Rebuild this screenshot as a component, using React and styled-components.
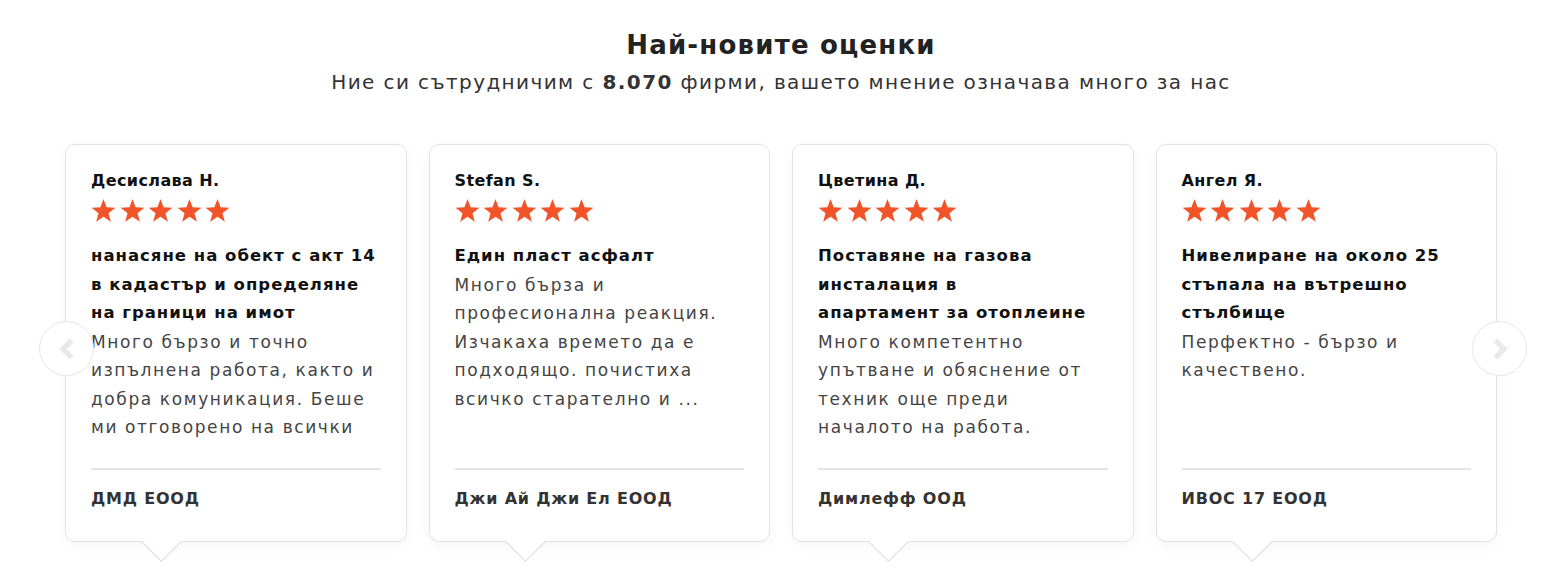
import React from "react";
import styled, { createGlobalStyle } from "styled-components";

const GlobalStyle = createGlobalStyle`
  body {
    margin: 0;
    background: #ffffff;
    font-family: "DejaVu Sans", "Noto Sans", sans-serif;
  }
`;

const Section = styled.section`
  display: flex;
  flex-direction: column;
  align-items: center;
  padding: 28px 0 30px;
`;

const Heading = styled.h2`
  margin: 0;
  font-size: 26px;
  line-height: 34px;
  font-weight: 700;
  letter-spacing: 1.2px;
  color: #222222;
`;

const Subheading = styled.p`
  margin: 6px 0 0;
  font-size: 20px;
  line-height: 28px;
  letter-spacing: 1.4px;
  color: #333333;
  b {
    font-weight: 700;
  }
`;

const Carousel = styled.div`
  position: relative;
  width: 1432px;
  margin-top: 48px;
`;

const Track = styled.div`
  display: grid;
  grid-template-columns: repeat(4, 1fr);
  gap: 22px;
`;

const Card = styled.article`
  position: relative;
  display: flex;
  flex-direction: column;
  height: 398px;
  box-sizing: border-box;
  padding: 24px 25px 0;
  background: #ffffff;
  border: 1px solid #e3e3e3;
  border-radius: 10px;
  box-shadow: 0 4px 14px rgba(0, 0, 0, 0.04);

  &::after {
    content: "";
    position: absolute;
    z-index: 1;
    left: 81px;
    bottom: -15px;
    width: 28px;
    height: 28px;
    background: #ffffff;
    border-right: 1px solid #dcdcdc;
    border-bottom: 1px solid #dcdcdc;
    transform: rotate(45deg);
  }
`;

const Author = styled.div`
  font-size: 16px;
  line-height: 24px;
  font-weight: 700;
  letter-spacing: 0.4px;
  color: #111111;
`;

const Stars = styled.div`
  display: flex;
  gap: 3.5px;
  margin-top: 4px;
  height: 26px;
  align-items: center;
`;

const Content = styled.div`
  margin-top: 19px;
  height: 200px;
  overflow: hidden;
  line-height: 28.5px;
  white-space: nowrap;
`;

const Title = styled.div`
  font-size: 16.5px;
  font-weight: 700;
  letter-spacing: 1px;
  color: #111111;
`;

const Body = styled.div`
  font-size: 17px;
  letter-spacing: 1.6px;
  color: #444444;
`;

const Divider = styled.hr`
  margin: 26px 0 0;
  border: none;
  height: 2px;
  background: #e4e4e4;
`;

const Company = styled.div`
  margin-top: 17px;
  font-size: 16px;
  line-height: 24px;
  font-weight: 700;
  letter-spacing: 0.8px;
  color: #333333;
`;

const ArrowButton = styled.button`
  position: absolute;
  z-index: 2;
  top: 177px;
  ${(p) => (p.$side === "left" ? "left: -26px;" : "right: -30px;")}
  width: 55px;
  height: 55px;
  padding: 0;
  display: flex;
  align-items: center;
  justify-content: center;
  border-radius: 50%;
  border: 1px solid #e6e6e6;
  background: #ffffff;
  cursor: pointer;
`;

const Star = () => (
  <svg width="25" height="25" viewBox="0 0 24 24">
    <path
      d="M12 1L14.94 8.95 23.41 9.29 16.76 14.55 19.05 22.71 12 18 4.95 22.71 7.24 14.55 0.59 9.29 9.06 8.95Z"
      fill="#f2542a"
    />
  </svg>
);

const Chevron = ({ dir }) => (
  <svg width="18" height="22" viewBox="0 0 18 22">
    <path
      d={dir === "left" ? "M13.5 2.5L5 11l8.5 8.5" : "M4.5 2.5L13 11l-8.5 8.5"}
      fill="none"
      stroke="#e9e9e9"
      strokeWidth="5.5"
    />
  </svg>
);

// редовете са разделени както в оригинала
const reviews = [
  {
    author: "Десислава Н.",
    title: ["нанасяне на обект с акт 14", "в кадастър и определяне", "на граници на имот"],
    body: [
      "Много бързо и точно",
      "изпълнена работа, както и",
      "добра комуникация. Беше",
      "ми отговорено на всички",
    ],
    company: "ДМД ЕООД",
  },
  {
    author: "Stefan S.",
    title: ["Един пласт асфалт"],
    body: [
      "Много бърза и",
      "професионална реакция.",
      "Изчакаха времето да е",
      "подходящо. почистиха",
      "всичко старателно и ...",
    ],
    company: "Джи Ай Джи Ел ЕООД",
  },
  {
    author: "Цветина Д.",
    title: ["Поставяне на газова", "инсталация в", "апартамент за отоплеине"],
    body: [
      "Много компетентно",
      "упътване и обяснение от",
      "техник още преди",
      "началото на работа.",
    ],
    company: "Димлефф ООД",
  },
  {
    author: "Ангел Я.",
    title: ["Нивелиране на около 25", "стъпала на вътрешно", "стълбище"],
    body: ["Перфектно - бързо и", "качествено."],
    company: "ИВОС 17 ЕООД",
  },
];

const Lines = ({ lines }) =>
  lines.map((line, i) => (
    <React.Fragment key={i}>
      {i > 0 && <br />}
      {line}
    </React.Fragment>
  ));

export default function App() {
  return (
    <>
      <GlobalStyle />
      <Section>
        <Heading>Най-новите оценки</Heading>
        <Subheading>
          Ние си сътрудничим с <b>8.070</b> фирми, вашето мнение означава много за нас
        </Subheading>
        <Carousel>
          <Track>
            {reviews.map((r) => (
              <Card key={r.author}>
                <Author>{r.author}</Author>
                <Stars>
                  {[0, 1, 2, 3, 4].map((i) => (
                    <Star key={i} />
                  ))}
                </Stars>
                <Content>
                  <Title>
                    <Lines lines={r.title} />
                  </Title>
                  <Body>
                    <Lines lines={r.body} />
                  </Body>
                </Content>
                <Divider />
                <Company>{r.company}</Company>
              </Card>
            ))}
          </Track>
          <ArrowButton $side="left" aria-label="Назад">
            <Chevron dir="left" />
          </ArrowButton>
          <ArrowButton $side="right" aria-label="Напред">
            <Chevron dir="right" />
          </ArrowButton>
        </Carousel>
      </Section>
    </>
  );
}
